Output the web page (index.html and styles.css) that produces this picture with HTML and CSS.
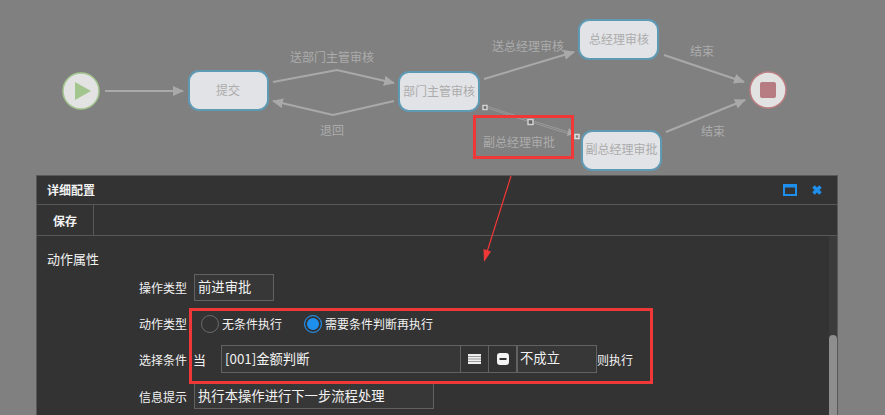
FILE: index.html
```html
<!DOCTYPE html>
<html lang="zh-CN">
<head>
    <meta charset="UTF-8">
    <title>详细配置</title>
    <link rel="stylesheet" href="styles.css">
</head>
<body>
    <div class="canvas">
        <svg class="edges" width="885" height="175" viewBox="0 0 885 175">
            <defs>
                <marker id="head" markerWidth="11" markerHeight="10" refX="10" refY="5" orient="auto" markerUnits="userSpaceOnUse">
                    <path d="M0 0 L11 5 L0 10 Z" fill="#a9a9a9"/>
                </marker>
            </defs>
            <g class="edge">
                <polyline points="105,91 183,91" marker-end="url(#head)"/>
                <polyline points="273,82 337,70 394,83" marker-end="url(#head)"/>
                <polyline points="394,101 333,115 273,101" marker-end="url(#head)"/>
                <polyline points="484,79 574,52" marker-end="url(#head)"/>
                <polyline points="664,55 744,82" marker-end="url(#head)"/>
                <polyline points="666,132 745,100" marker-end="url(#head)"/>
            </g>
            <polyline class="edge-sel" points="484,106 530,121 572,134"/>
            <polyline class="edge-sel-in" points="484,106 530,121 572,134"/>
            <path d="M569 128 L574 134 L567 136 Z" fill="#a9a9a9"/>
            <rect class="handle" x="483" y="105.500" width="4" height="4"/>
            <rect class="handle" x="528" y="119.500" width="5" height="5"/>
            <rect class="handle handle-end" x="575" y="134.500" width="4" height="4"/>
            <circle class="start" cx="81" cy="91" r="18"/>
            <path d="M75 82 L75 100 L91 91 Z" fill="#a3c68e"/>
            <circle class="stop" cx="768" cy="90" r="18"/>
            <rect x="760" y="82" width="16" height="16" rx="2" fill="#b67c81"/>
        </svg>

        <div class="node node-submit">提交</div>
        <div class="node node-dept">部门主管审核</div>
        <div class="node node-gm">总经理审核</div>
        <div class="node node-vice">副总经理审批</div>

        <span class="edge-label label-a">送部门主管审核</span>
        <span class="edge-label label-b">退回</span>
        <span class="edge-label label-c">送总经理审核</span>
        <span class="edge-label label-d">结束</span>
        <span class="edge-label label-e">结束</span>
        <span class="edge-label label-f">副总经理审批</span>
    </div>

    <div class="panel">
        <div class="panel-head">
            <div class="panel-title">详细配置</div>
            <svg class="head-icon" width="14" height="12" viewBox="0 0 14 12">
                <path d="M0 0H14V12H0Z M2 3.500V10H12V3.500Z" fill="#1e8fec" fill-rule="evenodd"/>
            </svg>
            <svg class="head-icon close-icon" width="10" height="10" viewBox="0 0 10 10">
                <path d="M1.500 1.500L8.500 8.500M8.500 1.500L1.500 8.500" stroke="#1e8fec" stroke-width="3.500"/>
            </svg>
        </div>
        <div class="toolbar">
            <div class="tool-btn">保存</div>
        </div>
        <div class="panel-body">
            <div class="form">
                <div class="section-title">动作属性</div>
                <div class="row row-type">
                    <label class="row-label">操作类型</label>
                    <div class="field field-short">前进审批</div>
                </div>
                <div class="row row-radio">
                    <label class="row-label">动作类型</label>
                    <span class="radio"></span>
                    <span class="radio-text">无条件执行</span>
                    <span class="radio radio-on"></span>
                    <span class="radio-text">需要条件判断再执行</span>
                </div>
                <div class="row row-cond">
                    <label class="row-label">选择条件</label>
                    <span class="cond-word">当</span>
                    <div class="cond-group">
                        <div class="field field-cond">[001]金额判断</div>
                        <div class="icon-cell">
                            <svg width="13" height="10" viewBox="0 0 13 10">
                                <path d="M0 0H13V10H0Z" fill="#eee"/>
                                <path d="M0 2.500H13M0 5H13M0 7.500H13" stroke="#777" stroke-width="0.700"/>
                            </svg>
                        </div>
                        <div class="icon-cell">
                            <svg width="12" height="12" viewBox="0 0 12 12">
                                <rect width="12" height="12" rx="3" fill="#f4f4f4"/>
                                <rect x="2.500" y="5" width="7" height="2" fill="#333"/>
                            </svg>
                        </div>
                        <div class="field field-state">不成立</div>
                    </div>
                    <span class="cond-tail">则执行</span>
                </div>
                <div class="row row-info">
                    <label class="row-label">信息提示</label>
                    <div class="field field-info">执行本操作进行下一步流程处理</div>
                </div>
            </div>
            <div class="scroll-track"><div class="scroll-thumb"></div></div>
        </div>
    </div>

    <div class="mark mark-node"></div>
    <div class="mark mark-form"></div>
    <svg class="mark-arrow" width="885" height="415" viewBox="0 0 885 415">
        <path d="M511 176 L487 252" stroke="#f03838" stroke-width="1.200" fill="none"/>
        <path d="M484 262 L483.500 249 L491 251.500 Z" fill="#f03838"/>
    </svg>
</body>
</html>
```
FILE: styles.css
```css
html, body {
    margin: 0;
    padding: 0;
}
body {
    position: relative;
    width: 885px;
    height: 415px;
    overflow: hidden;
    background-color: #808080;
    font-family: "Noto Sans CJK SC", "Noto Sans", sans-serif;
    font-size: 12px;
    color: #f2f2f2;
}

/* flow diagram */
.canvas {
    position: relative;
    height: 175px;
}
.edges {
    position: absolute;
    left: 0;
    top: 0;
}
.edge polyline {
    fill: none;
    stroke: #a9a9a9;
    stroke-width: 2;
}
.edge-sel {
    fill: none;
    stroke: #9c9c9c;
    stroke-width: 2.500;
}
.edge-sel-in {
    fill: none;
    stroke: #7c7c7c;
    stroke-width: 0.800;
}
.handle {
    fill: #666;
    stroke: #d0d0d0;
    stroke-width: 1.500;
}
.handle-end {
    fill: #808080;
    stroke: #e0e0e0;
}
.start {
    fill: #e2e3e2;
    stroke: #a3c68e;
    stroke-width: 1.500;
}
.stop {
    fill: #e2e2e2;
    stroke: #bb7d80;
    stroke-width: 1.500;
}
.node {
    position: absolute;
    box-sizing: border-box;
    display: flex;
    align-items: center;
    justify-content: center;
    white-space: nowrap;
    background-color: #e2e3e6;
    border: 2px solid #5f9ab5;
    border-radius: 11px;
    color: #acacac;
    height: 41px;
    padding-bottom: 3px;
}
.node-submit { left: 188px; top: 70px; width: 81px; padding-right: 1px; }
.node-dept { left: 398px; top: 71px; width: 82px; }
.node-gm { left: 578px; top: 19px; width: 81px; padding-left: 1px; }
.node-vice { left: 581px; top: 130px; width: 81px; padding-bottom: 5px; }
.edge-label {
    position: absolute;
    transform: translateX(-50%);
    white-space: nowrap;
    color: #acacac;
    line-height: 16px;
}
.label-a { left: 332px; top: 49px; }
.label-b { left: 332px; top: 122px; }
.label-c { left: 528px; top: 38px; }
.label-d { left: 702px; top: 43px; }
.label-e { left: 713px; top: 123px; }
.label-f { left: 519px; top: 134px; }

/* details panel */
.panel {
    box-sizing: border-box;
    width: 802px;
    height: 240px;
    margin-left: 36px;
    background-color: #333;
    border: 1px solid #585858;
    border-bottom: none;
}
.panel-head {
    display: flex;
    align-items: center;
    box-sizing: border-box;
    height: 29px;
    padding: 0 15px 2px 10px;
    border-bottom: 1px solid #585858;
}
.panel-title {
    flex: 1;
    font-weight: bold;
}
.head-icon {
    display: block;
    margin-top: 2px;
}
.close-icon {
    margin-left: 15px;
}
.toolbar {
    display: flex;
    height: 30px;
    border-bottom: 1px solid #585858;
}
.tool-btn {
    display: flex;
    align-items: center;
    justify-content: center;
    box-sizing: border-box;
    width: 57px;
    font-weight: bold;
    border-right: 1px solid #585858;
}
.panel-body {
    display: flex;
    height: 180px;
    overflow: hidden;
}
.form {
    flex: 1;
}
.section-title {
    margin: 14px 0 0 10px;
    line-height: 17px;
    font-size: 13px;
}
.row {
    display: flex;
    align-items: center;
}
.row-label {
    width: 150px;
    text-align: right;
    flex-shrink: 0;
}
.field {
    box-sizing: border-box;
    height: 27px;
    line-height: 24px;
    padding-left: 3px;
    border: 1px solid #626262;
    background-color: #373737;
    font-size: 13.330px;
}
.row-type { margin-top: 7px; }
.row-type .field { margin-left: 7px; }
.field-short { width: 80px; }
.row-radio {
    height: 27px;
    margin-top: 9px;
}
.radio {
    box-sizing: border-box;
    width: 18px;
    height: 18px;
    margin-left: 14px;
    border-radius: 50%;
    border: 1px solid #6a6a6a;
    background-color: #333;
}
.radio-on {
    margin-left: 22px;
    border-color: #1e8fec;
    background-color: #1e8fec;
    box-shadow: inset 0 0 0 2px #333;
}
.radio-text {
    margin-left: 3px;
}
.row-cond {
    margin-top: 8px;
}
.cond-word {
    width: 34px;
    padding-left: 6px;
    box-sizing: border-box;
    font-size: 13px;
}
.cond-group {
    display: flex;
}
.field-cond {
    width: 240px;
    height: 28px;
    line-height: 26px;
}
.icon-cell {
    box-sizing: border-box;
    display: flex;
    align-items: center;
    justify-content: center;
    width: 28px;
    height: 28px;
    border: 1px solid #626262;
    border-left: none;
}
.field-state {
    width: 80px;
    height: 28px;
    line-height: 24px;
    padding-left: 2px;
}
.cond-tail {
    font-size: 12px;
}
.row-info {
    margin-top: 10px;
}
.row-info .field {
    margin-left: 7px;
}
.field-info {
    width: 240px;
    height: 26px;
}
.scroll-track {
    position: relative;
    width: 8px;
    background-color: #3b3b3b;
}
.scroll-thumb {
    position: absolute;
    left: 0;
    right: 0;
    top: 99px;
    bottom: 0;
    border-radius: 4px 4px 0 0;
    background-color: #8e8e8e;
}

/* red annotations lie over the screenshot */
.mark {
    position: absolute;
    box-sizing: border-box;
    border: 3px solid #f03838;
}
.mark-node {
    left: 473px;
    top: 115px;
    width: 101px;
    height: 44px;
}
.mark-form {
    left: 189px;
    top: 308px;
    width: 464px;
    height: 76px;
}
.mark-arrow {
    position: absolute;
    left: 0;
    top: 0;
    pointer-events: none;
}
```
